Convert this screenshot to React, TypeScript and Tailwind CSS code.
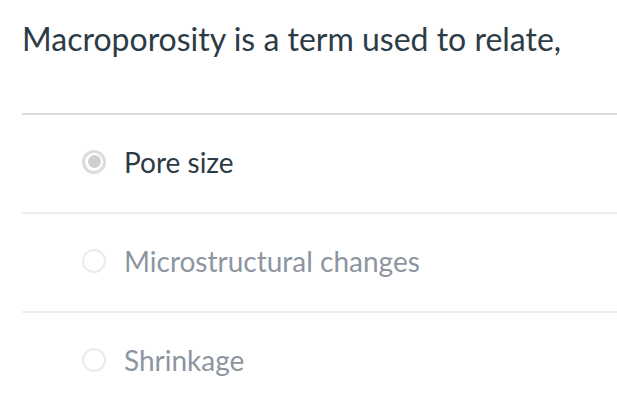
export default function App() {
  const options = [
    { label: "Pore size", selected: true },
    { label: "Microstructural changes", selected: false },
    { label: "Shrinkage", selected: false },
  ];
  return (
    <div className="w-[617px] h-[403px] bg-white overflow-hidden" style={{ fontFamily: "Lato, 'Noto Sans', sans-serif" }}>
      <div className="pl-[22px] pt-[19px]">
        <div className="text-[32px] leading-[40px] text-[#2d3b45] h-[94px]">Macroporosity is a term used to relate,</div>
        <div className="h-[2px] bg-[#dddddd]" />
        {options.map((o, i) => (
          <div key={i}>
            <div className="h-[97px] flex items-center pl-[60px] pb-[4px]">
              {o.selected ? (
                <div className="w-[24px] h-[24px] rounded-full border-[3px] border-[#dcdcdc] flex items-center justify-center">
                  <div className="w-[13px] h-[13px] rounded-full bg-[#cfcfcf]" />
                </div>
              ) : (
                <div className="w-[24px] h-[24px] rounded-full border-[2px] border-[#ebebeb]" />
              )}
              <span className={`ml-[18px] text-[28px] ${o.selected ? "text-[#2d3b45]" : "text-[#8d959f]"}`}>{o.label}</span>
            </div>
            {i < 2 && <div className="h-[2px] bg-[#eeeeee]" />}
          </div>
        ))}
      </div>
    </div>
  );
}
